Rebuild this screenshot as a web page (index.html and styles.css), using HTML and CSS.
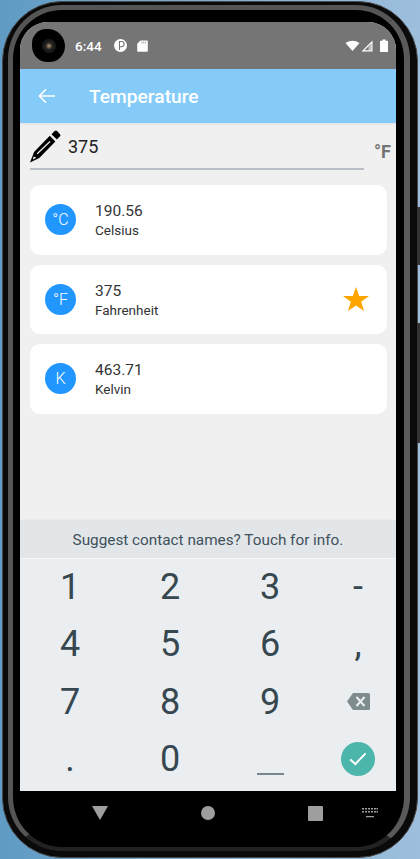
FILE: index.html
```html
<!DOCTYPE html>
<html lang="en">
<head>
    <meta charset="UTF-8">
    <meta name="viewport" content="width=device-width, initial-scale=1.0">
    <title>Temperature</title>
    <link rel="stylesheet" href="styles.css">
</head>
<body>

    <div class="side-btn side-btn-top"></div>
    <div class="side-btn side-btn-low"></div>

    <div class="phone">
        <div class="bezel">
            <div class="screen">

                <div class="status-bar">
                    <div class="camera"><div class="lens"></div></div>
                    <span class="clock">6:44</span>
                    <svg class="status-icon" width="13" height="13" viewBox="0 0 13 13">
                        <circle cx="6.500" cy="6.500" r="6.500" fill="#fff"/>
                        <path d="M5.500 11V2.500H7.500A2.600 2.600 0 0 1 7.500 7.700H5.500" fill="none" stroke="#757575" stroke-width="1.100"/>
                    </svg>
                    <svg class="status-icon" width="11" height="12" viewBox="0 0 11 12">
                        <path d="M3.500 0.500H10a.8.8 0 0 1 .8.8v9.600a.8.8 0 0 1-.8.8H1a.8.8 0 0 1-.8-.8V3.800z" fill="#fff"/>
                        <path d="M4.600 1.500h.8v2h-.8zM6.400 1.500h.8v2h-.8zM8.200 1.500h.8v2h-.8z" fill="#9a9a9a"/>
                    </svg>
                    <div class="status-right">
                        <svg width="15" height="11" viewBox="0 0 15 11"><path d="M0.500 3Q7.500-1.500 14.500 3L7.500 11z" fill="#fff"/></svg>
                        <svg width="12" height="12" viewBox="0 0 12 12"><path d="M11.500 0.500V11.500H0.500z M10.300 3.400L3.500 10.300H10.300z" fill="#fff" fill-rule="evenodd"/><path d="M7.500 7V10.300H10.300V3.400z" fill="#fff" opacity=".55"/></svg>
                        <svg class="battery" width="8" height="13" viewBox="0 0 8 13"><path d="M2.500 0.500h3v1.200H7.400a.6.6 0 0 1 .6.6v10a.6.6 0 0 1-.6.6H.6a.6.6 0 0 1-.6-.6v-10a.6.6 0 0 1 .6-.6h1.900z" fill="#fff"/></svg>
                    </div>
                </div>

                <div class="app-bar">
                    <svg class="back" width="18" height="16" viewBox="0 0 18 16" fill="none" stroke="#fff" stroke-width="1.600">
                        <path d="M17 8H1.600M8 1.200L1.400 8L8 14.800"/>
                    </svg>
                    <h1 class="title">Temperature</h1>
                </div>

                <div class="content">
                    <div class="input-row">
                        <div class="input-wrap">
                            <svg class="pencil" width="31" height="33" viewBox="0 0 31 33">
                                <path d="M24.500 1.200a2 2 0 0 1 2.700 0l2.600 2.700a2 2 0 0 1 0 2.700l-3 3-5.300-5.400z" fill="#000"/>
                                <path d="M19.800 5.800L25.400 11.600L9.300 28L0 32.500L4 22z" fill="#000"/>
                                <path d="M7.200 23.800L20 11.500" stroke="#f0f0f0" stroke-width="1.200" fill="none"/>
                                <path d="M3.600 26.500L6.400 27.800L2.800 29.600z" fill="#f0f0f0"/>
                            </svg>
                            <span class="input-value">375</span>
                        </div>
                        <span class="unit">°F</span>
                    </div>

                    <div class="card">
                        <div class="badge">°C</div>
                        <div class="card-text">
                            <div class="value">190.56</div>
                            <div class="label">Celsius</div>
                        </div>
                    </div>
                    <div class="card">
                        <div class="badge">°F</div>
                        <div class="card-text">
                            <div class="value">375</div>
                            <div class="label">Fahrenheit</div>
                        </div>
                        <svg class="star" width="26" height="24" viewBox="0 0 26 24">
                            <path d="M13 0L16.200 8.900H26L18.200 14.700L21 24L13 18.400L5 24L7.800 14.700L0 8.900H9.800z" fill="#ffa500"/>
                        </svg>
                    </div>
                    <div class="card">
                        <div class="badge">K</div>
                        <div class="card-text">
                            <div class="value">463.71</div>
                            <div class="label">Kelvin</div>
                        </div>
                    </div>
                </div>

                <div class="keyboard">
                    <div class="suggest">Suggest contact names? Touch for info.</div>
                    <div class="keys">
                        <div class="key">1</div>
                        <div class="key">2</div>
                        <div class="key">3</div>
                        <div class="key">-</div>
                        <div class="key">4</div>
                        <div class="key">5</div>
                        <div class="key">6</div>
                        <div class="key">,</div>
                        <div class="key">7</div>
                        <div class="key">8</div>
                        <div class="key">9</div>
                        <div class="key">
                            <svg width="23" height="17" viewBox="0 0 23 17">
                                <path d="M6 0H21.500a1.500 1.500 0 0 1 1.500 1.500v14a1.500 1.500 0 0 1-1.500 1.500H6L0 8.500z" fill="#7f8c8d"/>
                                <path d="M9.500 4L17.500 13M17.500 4L9.500 13" stroke="#eaeef1" stroke-width="2" fill="none"/>
                            </svg>
                        </div>
                        <div class="key">.</div>
                        <div class="key">0</div>
                        <div class="key"><div class="space-bar"></div></div>
                        <div class="key">
                            <div class="done">
                                <svg width="18" height="14" viewBox="0 0 18 14" fill="none" stroke="#fff" stroke-width="2">
                                    <path d="M1.200 7.400L6.400 12L16.600 1.400"/>
                                </svg>
                            </div>
                        </div>
                    </div>
                </div>
            </div>

            <div class="nav-bar">
                <svg width="16" height="14" viewBox="0 0 16 14"><path d="M0 0H16L8 14z" fill="#9e9e9e"/></svg>
                <svg class="nav-home" width="14" height="14" viewBox="0 0 14 14"><circle cx="7" cy="7" r="7" fill="#9e9e9e"/></svg>
                <svg class="nav-recent" width="15" height="15" viewBox="0 0 15 15"><rect width="15" height="15" rx="1" fill="#9e9e9e"/></svg>
                <svg class="nav-keyboard" width="16" height="10" viewBox="0 0 16 10" fill="#9e9e9e">
                    <path d="M0 0h2v1.500H0zM3 0h2v1.500H3zM6 0h2v1.500H6zM9 0h2v1.500H9zM12 0h2v1.500h-2zM14.500 0h1.500v1.500h-1.500zM0 3h2v1.500H0zM3 3h2v1.500H3zM6 3h2v1.500H6zM9 3h2v1.500H9zM12 3h2v1.500h-2zM14.500 3h1.500v1.500h-1.500zM4 8h8v1.200H4z"/>
                </svg>
            </div>
        </div>
    </div>

</body>
</html>
```

FILE: styles.css
```css
* {
    box-sizing: border-box;
}
html, body {
    margin: 0;
    height: 100%;
}
body {
    width: 420px;
    height: 859px;
    overflow: hidden;
    position: relative;
    padding: 1px 2px;
    font-family: Roboto, "Liberation Sans", sans-serif;
    background: linear-gradient(90deg, #5f9bc4 0%, #9dbfdc 100%);
}
.phone {
    width: 416px;
    height: 857px;
    border-radius: 60px;
    padding: 3px 7px 6px 5px;
    border: 1px solid #4a4a4a;
    background: #0a0a0a;
}
.bezel {
    height: 100%;
    border-radius: 54px;
    border-style: solid;
    border-width: 5px 6px 4px 5px;
    border-color: #555 #5a5a5a #222 #555;
    background: #000;
    padding: 12px 8px 0 7px;
    display: flex;
    flex-direction: column;
}
.screen {
    width: 376px;
    height: 769px;
    background: #f0f0f0;
    border-radius: 28px 28px 0 0;
    overflow: hidden;
    display: flex;
    flex-direction: column;
    flex-shrink: 0;
}
.side-btn {
    position: absolute;
    right: 0;
    width: 3px;
    background: #333;
}
.side-btn-top {
    top: 207px;
    height: 58px;
}
.side-btn-low {
    top: 323px;
    height: 120px;
}

/* status bar */
.status-bar {
    height: 47px;
    background: #757575;
    display: flex;
    align-items: center;
    color: #fff;
    padding: 0 8px 0 12px;
    position: relative;
    flex-shrink: 0;
}
.camera {
    width: 33px;
    height: 33px;
    border-radius: 45% 55% 50% 50%;
    background: #000;
    margin-right: 10px;
    display: flex;
    align-items: center;
    justify-content: center;
}
.lens {
    width: 14px;
    height: 14px;
    border-radius: 50%;
    background: radial-gradient(circle, #b09a80 0%, #5a4a3a 22%, #1c1c1c 40%, #141414 100%);
}
.clock {
    font-size: 13.5px;
    font-weight: 500;
    margin-right: 12px;
}
.status-icon {
    margin-right: 10px;
}
.status-right {
    margin-left: auto;
    display: flex;
    align-items: center;
    gap: 1px;
}
.battery {
    margin-left: 6px;
}

/* app bar */
.app-bar {
    height: 54px;
    background: #84cbfa;
    display: flex;
    align-items: center;
    padding-left: 18px;
    flex-shrink: 0;
    box-shadow: 0 1px 2px rgba(0, 0, 0, 0.08);
}
.title {
    margin: 0 0 0 33px;
    font-size: 19.2px;
    font-weight: 500;
    color: #fff;
}

/* list */
.content {
    flex: 1;
    padding: 6px 9px 0 10px;
}
.input-row {
    display: flex;
    align-items: flex-end;
    height: 41px;
    margin-bottom: 15px;
}
.input-wrap {
    width: 334px;
    height: 41px;
    flex-shrink: 0;
    display: flex;
    align-items: flex-start;
    border-bottom: 2px solid #b8bec6;
}
.pencil {
    margin-top: 1px;
    margin-right: 7px;
}
.input-value {
    font-size: 18px;
    line-height: 21px;
    margin-top: 7px;
    color: #222;
}
.unit {
    font-size: 18px;
    font-weight: 700;
    color: #757575;
    margin-left: 10px;
    margin-bottom: 8px;
    line-height: 21px;
}
.card {
    height: 69.5px;
    background: #fff;
    border-radius: 10px;
    margin-bottom: 10px;
    display: flex;
    align-items: center;
    padding: 0 18px 0 15px;
}
.badge {
    width: 31px;
    height: 31px;
    border-radius: 50%;
    background: #2196ff;
    color: #fff;
    font-size: 16px;
    font-weight: 300;
    line-height: 32px;
    text-align: center;
    margin-right: 19px;
}
.card-text {
    flex: 1;
    padding-top: 2px;
}
.value {
    font-size: 15.5px;
    line-height: 20px;
    color: #333;
}
.label {
    font-size: 13.5px;
    line-height: 19px;
    color: #333;
}

/* keyboard */
.keyboard {
    height: 272px;
    background: #eaeef1;
    flex-shrink: 0;
}
.suggest {
    height: 40px;
    background: #e2e6e9;
    border-bottom: 1px solid #f5f7f8;
    border-top: 1px solid #e9ebed;
    font-size: 15.3px;
    line-height: 40px;
    text-align: center;
    color: #3f515c;
}
.keys {
    display: grid;
    grid-template-columns: 100px 100px 100px 76px;
    grid-auto-rows: 57.5px;
}
.key {
    display: flex;
    align-items: center;
    justify-content: center;
    padding-bottom: 2px;
    font-size: 36px;
    color: #37474f;
}
.space-bar {
    width: 27px;
    height: 2px;
    background: #78868e;
    margin-top: 30px;
}
.done {
    width: 34px;
    height: 34px;
    border-radius: 50%;
    background: #4db6ac;
    display: flex;
    align-items: center;
    justify-content: center;
}

/* nav bar */
.nav-bar {
    width: 376px;
    height: 44px;
    display: flex;
    align-items: center;
    padding-left: 72px;
}
.nav-home, .nav-recent {
    margin-left: 93px;
}
.nav-keyboard {
    margin-left: 39px;
}
```
